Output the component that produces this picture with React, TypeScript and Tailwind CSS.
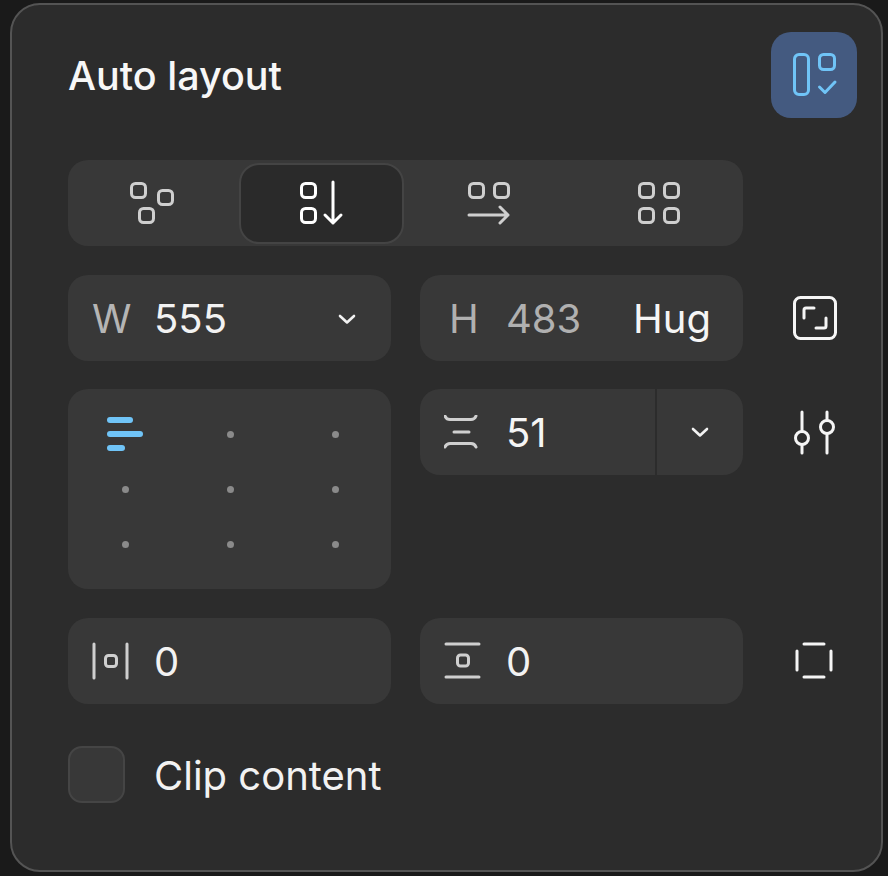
import { ReactNode } from "react";

// Small square used by most of the layout icons
const Square = ({ x, y, size = 14 }: { x: number; y: number; size?: number }) => (
  <rect x={x} y={y} width={size} height={size} rx={4} />
);

const Icon = ({
  size = 48,
  width = 3,
  className = "",
  children,
}: {
  size?: number;
  width?: number;
  className?: string;
  children: ReactNode;
}) => (
  <svg
    width={size}
    height={size}
    viewBox={`0 0 ${size} ${size}`}
    fill="none"
    stroke="currentColor"
    strokeWidth={width}
    strokeLinecap="round"
    strokeLinejoin="round"
    className={`shrink-0 ${className}`}
  >
    {children}
  </svg>
);

const Chevron = () => (
  <svg width="20" height="14" viewBox="0 0 20 14" fill="none" stroke="#f2f2f2" strokeWidth="2.6" strokeLinecap="round" strokeLinejoin="round">
    <path d="M3 4l7 6.5L17 4" />
  </svg>
);

const Field = ({ children, className = "" }: { children: ReactNode; className?: string }) => (
  <div className={`flex h-[86px] w-[323px] items-center rounded-[20px] bg-[#383838] pl-[24px] pt-[2px] text-[40px] ${className}`}>
    {children}
  </div>
);

// Fixed slot so the values all start at the same offset
const Slot = ({ children }: { children: ReactNode }) => (
  <div className="flex w-[62px] shrink-0 items-center">{children}</div>
);

const Side = ({ children }: { children: ReactNode }) => (
  <div className="ml-[18px] flex h-[86px] w-[48px] items-center justify-center text-[#f5f5f5]">{children}</div>
);

const dots = [1, 2, 3, 4, 5, 6, 7, 8];

export default function App() {
  return (
    <div className="h-[876px] w-[888px] overflow-hidden bg-[#1a1a1a] pl-[10px] pt-[3px] font-['Inter',sans-serif]">
      <div className="h-[869px] w-[873px] rounded-[30px] border-2 border-[#545454] bg-[#2c2c2c] pl-[56px] pt-[27px]">
        {/* Header */}
        <div className="flex w-[789px] items-center justify-between">
          <h1 className="pt-[4px] text-[39.5px] font-medium text-[#f7f7f7]">Auto layout</h1>
          <button className="flex h-[86px] w-[86px] items-center justify-center rounded-[20px] bg-[#445a80] text-[#70c4f7]">
            <Icon>
              <rect x="4.5" y="3.5" width="14" height="40" rx="4.5" />
              <Square x={29.5} y={3.5} size={15} />
              <path d="M29.500 36l5.500 5.500 10-10.500" />
            </Icon>
          </button>
        </div>

        {/* Layout mode */}
        <div className="mt-[42px] grid h-[86px] w-[675px] grid-cols-4 items-center justify-items-center rounded-[20px] bg-[#383838]">
          <div className="pr-[3px] text-[#cfcfcf]">
            <Icon>
              <Square x={4.5} y={4.5} />
              <Square x={31.5} y={11.5} />
              <Square x={12.5} y={29.5} />
            </Icon>
          </div>
          <div className="flex h-[81px] w-[165px] items-center justify-center rounded-[20px] border-2 border-[#444444] bg-[#2a2a2a] text-white">
            <Icon>
              <Square x={4.5} y={4.5} />
              <Square x={4.5} y={29.5} />
              <path d="M36 3v41M28 36l8 8 8-8" />
            </Icon>
          </div>
          <div className="text-[#cfcfcf]">
            <Icon>
              <Square x={3.5} y={4.5} />
              <Square x={28.5} y={4.5} />
              <path d="M3 36h39M34 28l8 8-8 8" />
            </Icon>
          </div>
          <div className="text-[#cfcfcf]">
            <Icon>
              <Square x={4.5} y={4.5} />
              <Square x={29.5} y={4.5} />
              <Square x={4.5} y={29.5} />
              <Square x={29.5} y={29.5} />
            </Icon>
          </div>
        </div>

        {/* Width / height */}
        <div className="mt-[29px] flex items-center gap-[29px]">
          <Field className="pr-[34px]">
            <Slot>
              <span className="text-[#b5b5b5]">W</span>
            </Slot>
            <span className="text-[#f2f2f2]">555</span>
            <span className="ml-auto">
              <Chevron />
            </span>
          </Field>
          <Field className="pr-[32px]">
            <Slot>
              <span className="pl-[5px] text-[#b0b0b0]">H</span>
            </Slot>
            <span className="text-[#b0b0b0]">483</span>
            <span className="ml-auto text-[#f5f5f5]">Hug</span>
          </Field>
          <Side>
            <Icon>
              <rect x="4.5" y="3.5" width="41" height="41" rx="6" />
              <path d="M14 24v-8a2 2 0 0 1 2-2h8M36 24v8a2 2 0 0 1-2 2h-8" />
            </Icon>
          </Side>
        </div>

        {/* Alignment + gap */}
        <div className="mt-[28px] flex items-start gap-[29px]">
          <div className="flex h-[200px] w-[323px] items-center justify-center rounded-[20px] bg-[#383838] pl-[1px]">
            <div className="grid grid-cols-[105px_105px_105px] grid-rows-[55px_55px_55px] items-center justify-items-center">
              <div className="flex w-[36px] flex-col gap-[8px] self-center">
                <div className="h-[6px] w-[26px] rounded-full bg-[#70c4f7]" />
                <div className="h-[6px] w-[36px] rounded-full bg-[#70c4f7]" />
                <div className="h-[6px] w-[18px] rounded-full bg-[#70c4f7]" />
              </div>
              {dots.map((d) => (
                <div key={d} className="h-[7px] w-[7px] rounded-full bg-[#8a8a8a]" />
              ))}
            </div>
          </div>
          <Field>
            <Slot>
              <Icon size={36} className="text-[#cfcfcf]">
                <path d="M1 1c1 2.500 3 3.500 5 3.500h21c2 0 4-1 5-3.500M10 17h15M1 32c1-2.500 3-3.500 5-3.500h21c2 0 4 1 5 3.500" />
              </Icon>
            </Slot>
            <span className="text-[#f5f5f5]">51</span>
            <div className="-mt-[2px] ml-auto flex h-[86px] w-[88px] items-center justify-center border-l-2 border-[#2c2c2c]">
              <Chevron />
            </div>
          </Field>
          <Side>
            <Icon>
              <circle cx="12" cy="30" r="6.500" />
              <circle cx="37" cy="19" r="6.500" />
              <path d="M12 4v19M12 37v8M37 4v8M37 26v19" />
            </Icon>
          </Side>
        </div>

        {/* Padding */}
        <div className="flex items-center gap-[29px] pt-[29px]">
          <Field>
            <Slot>
              <Icon size={40} className="text-[#cfcfcf]">
                <path d="M2 2v34M35 2v34" />
                <rect x="13.500" y="13.500" width="11" height="11" rx="3" />
              </Icon>
            </Slot>
            <span className="text-[#f2f2f2]">0</span>
          </Field>
          <Field>
            <Slot>
              <Icon size={40} className="text-[#cfcfcf]">
                <path d="M2 2h33M2 35h33" />
                <rect x="13.500" y="13" width="11" height="11" rx="3" />
              </Icon>
            </Slot>
            <span className="text-[#f2f2f2]">0</span>
          </Field>
          <Side>
            <Icon size={40}>
              <path d="M10 3h20M10 36h20M3 10v19M37 10v19" />
            </Icon>
          </Side>
        </div>

        {/* Clip content */}
        <div className="mt-[42px] flex items-center gap-[29px]">
          <div className="h-[57px] w-[57px] rounded-[14px] border-2 border-[#454545] bg-[#383838]" />
          <span className="pt-[3px] text-[40px] leading-[54px] text-[#f2f2f2]">Clip content</span>
        </div>
      </div>
    </div>
  );
}
